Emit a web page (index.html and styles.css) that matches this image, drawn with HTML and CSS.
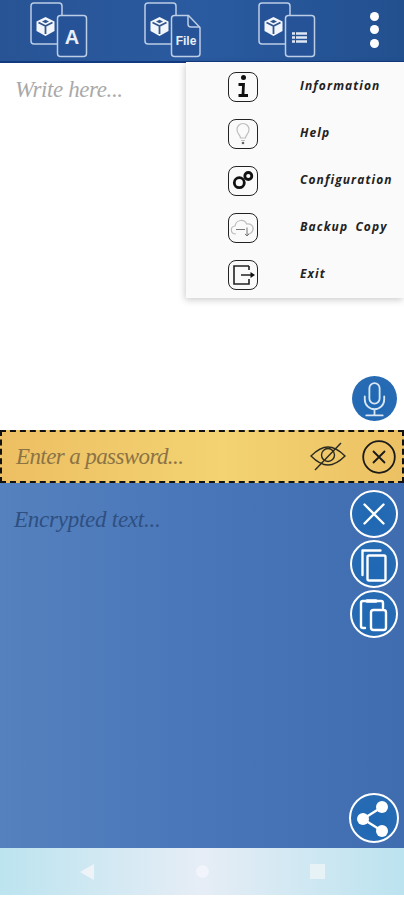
FILE: index.html
```html
<!DOCTYPE html>
<html lang="en">
<head>
<meta charset="utf-8">
<title>Encrypt</title>
<link rel="stylesheet" href="styles.css">
</head>
<body>
<div class="app">
  <svg class="defs" width="0" height="0">
    <defs>
      <g id="stack">
        <path class="card" d="M28 44h-23a3 3 0 0 1-3-3v-35a3 3 0 0 1 3-3h25a3 3 0 0 1 3 3v9"/>
        <path class="cube" d="M7.500 21.500l9-4.500 9 4.500v9.500l-9 5-9-5z"/>
        <path class="cube-line" d="M9.500 22.500l7 3.500 7-3.500M16.500 26v8"/>
        <path class="cube-top" d="M13 21.500l3.500-1.800 3.500 1.800-3.500 1.800z"/>
      </g>
    </defs>
  </svg>

  <header class="topbar">
    <svg class="tab" viewBox="0 0 60 60"><use href="#stack"/><rect class="card" x="28.500" y="15.500" width="29" height="41" rx="3"/><text class="tab-a" x="43" y="44">A</text></svg>
    <svg class="tab" viewBox="0 0 60 60"><use href="#stack"/><path class="card" d="M28.500 18.500a3 3 0 0 1 3-3h14l11.500 12v26a3 3 0 0 1-3 3h-22.500a3 3 0 0 1-3-3z"/><path class="fold" d="M45 16v8a3 3 0 0 0 3 3h9"/><text class="tab-f" x="43" y="45">File</text></svg>
    <svg class="tab" viewBox="0 0 60 60"><use href="#stack"/><rect class="card" x="28.500" y="15.500" width="29" height="41" rx="3"/><path class="lines" d="M35 33.500h3M39 33.500h11M35 37.500h3M39 37.500h11M35 41.500h3M39 41.500h11"/></svg>
    <div class="dots"><span></span><span></span><span></span></div>
  </header>

  <main class="write">
    <p class="placeholder write-text">Write here...</p>
    <button class="round mic" aria-label="Microphone">
      <svg viewBox="0 0 44 44"><rect x="17" y="7" width="10" height="20" rx="5"/><path d="M12.500 20v3a9.500 9.500 0 0 0 19 0v-3M22 33v5M14 38.500h16"/></svg>
    </button>
  </main>

  <nav class="menu">
    <div class="menu-row"><span class="menu-icon"><svg viewBox="0 0 30 30"><circle class="ink" cx="15.500" cy="6.500" r="2.500"/><path class="ink-s" d="M10.500 13.500h5l-.5 10M10.500 24.500h9.500"/></svg></span><span class="menu-label">Information</span></div>
    <div class="menu-row"><span class="menu-icon"><svg viewBox="0 0 30 30"><path class="pale" d="M12.500 20c0-3-3.500-4-3.500-8.500a6 6 0 0 1 12 0c0 4.500-3.500 5.500-3.500 8.500zM13 22.500h4"/><circle class="dim" cx="15" cy="25" r="1.300"/></svg></span><span class="menu-label">Help</span></div>
    <div class="menu-row"><span class="menu-icon"><svg viewBox="0 0 30 30"><circle class="gear" cx="11.300" cy="17.700" r="5"/><circle class="gear" cx="20.300" cy="11" r="3.500"/></svg></span><span class="menu-label">Configuration</span></div>
    <div class="menu-row"><span class="menu-icon"><svg viewBox="0 0 30 30"><path class="pale" d="M8 22c-6 0-6-7.500-1-8 1-6.500 9.500-7.500 11.500-2 5.500-1 8 3.500 6 7-1 2-2.500 3-4.500 3h-1"/><path class="dim-s" d="M8 17.500h9M19 15.500v8.500M17 22l2 2 2-2"/></svg></span><span class="menu-label">Backup Copy</span></div>
    <div class="menu-row"><span class="menu-icon"><svg viewBox="0 0 30 30"><path class="exit" d="M21 7h-15v18h15v-5M21 7v4M13 16h10"/><path class="ink" d="M22.500 13l4.500 3-4.500 3z"/></svg></span><span class="menu-label">Exit</span></div>
  </nav>

  <section class="password">
    <span class="placeholder pass-text">Enter a password...</span>
    <svg class="eye" viewBox="0 0 38 30"><path d="M2 14c6-6 12-9 17-9s11 3 17 9c-6 6-12 9-17 9S8 20 2 14z"/><circle cx="19" cy="13" r="6.500"/><path d="M32 1L6 28"/></svg>
    <svg class="clear" viewBox="0 0 34 34"><circle cx="17" cy="17" r="15.800"/><path d="M11 11l12 12M23 11L11 23"/></svg>
  </section>

  <section class="cipher">
    <p class="placeholder cipher-text">Encrypted text...</p>
    <div class="actions">
      <button class="round ring" aria-label="Clear"><svg viewBox="0 0 44 44"><path d="M12.500 12.500l19 19M31.500 12.500l-19 19"/></svg></button>
      <button class="round ring" aria-label="Copy"><svg viewBox="0 0 44 44"><path d="M10.500 33V8.500h18"/><rect x="15.500" y="13.500" width="18" height="25" rx="1.500"/></svg></button>
      <button class="round ring" aria-label="Paste"><svg viewBox="0 0 44 44"><path d="M13 36h-2a2 2 0 0 1-2-2V11a2 2 0 0 1 2-2h18a2 2 0 0 1 2 2v5"/><path class="clip" d="M15 9h9"/><rect x="19" y="18" width="15" height="20" rx="2.500"/></svg></button>
      <button class="round ring share" aria-label="Share"><svg viewBox="0 0 46 46"><path d="M31 12L12 24l19 12"/><circle class="solid" cx="31" cy="12" r="6"/><circle class="solid" cx="12" cy="24" r="6"/><circle class="solid" cx="31" cy="36" r="6"/></svg></button>
    </div>
  </section>

  <footer class="navbar">
    <svg class="nav-back" viewBox="0 0 14 16"><path d="M14 0v16L0 8z"/></svg>
    <span class="nav-home"></span>
    <span class="nav-recent"></span>
  </footer>
  <div class="strip"></div>
</div>
</body>
</html>
```
FILE: styles.css
```css
* { box-sizing: border-box; }
html, body { margin: 0; padding: 0; background: #fff; }
.app { position: relative; width: 404px; height: 900px; display: flex; flex-direction: column; overflow: hidden; }
.defs { position: absolute; }

.topbar { height: 63px; flex: none; display: flex; align-items: flex-start; padding-left: 29px; background: linear-gradient(90deg, #285495, #2a5aa0 50%, #22508f); border-bottom: 2px solid #123a80; position: relative; }
.tab { width: 60px; height: 60px; margin-right: 54px; flex: none; }
.card { fill: #265397; stroke: #bccde6; stroke-width: 1.500; }
.fold { fill: none; stroke: #bccde6; stroke-width: 1.500; }
.cube { fill: #f2f5f9; stroke: none; }
.cube-line { fill: none; stroke: #30558f; stroke-width: 1.800; }
.cube-top { fill: #30558f; }
.tab-a { font: 700 20px "Liberation Sans", sans-serif; fill: #e8eef7; text-anchor: middle; }
.tab-f { font: 700 12px "Liberation Sans", sans-serif; fill: #e8eef7; text-anchor: middle; }
.lines { fill: none; stroke: #dfe7f3; stroke-width: 2.500; }
.dots { display: flex; flex-direction: column; gap: 4.500px; margin: 11.500px 0 0 -1px; }
.dots span { width: 9px; height: 9px; border-radius: 50%; background: #fff; }

.placeholder { margin: 0; font-family: "Liberation Serif", serif; font-style: italic; font-size: 23px; }

.write { height: 367px; flex: none; display: flex; justify-content: space-between; padding: 12px 7px 9px 15px; background: #fff; }
.write-text { line-height: 30px; letter-spacing: -.4px; color: #a9a9a9; }
.round { width: 46px; height: 46px; padding: 0; border: 0; border-radius: 50%; background: radial-gradient(circle at 50% 60%, #1f68b4, #2a6cb3); flex: none; }
.round svg { display: block; width: 100%; height: 100%; fill: none; stroke: #fff; stroke-width: 2.400; stroke-linecap: round; stroke-linejoin: round; }
.mic { align-self: flex-end; width: 45px; height: 45px; }
.mic svg { stroke: #d9e6f3; stroke-width: 1.800; }

.menu { position: absolute; top: 62px; left: 186px; width: 218px; height: 236px; padding: 1px 0 0 42px; background: #fafafa; box-shadow: -1px 2px 7px rgba(0,0,0,.2); display: flex; flex-direction: column; }
.menu-row { height: 47px; flex: none; display: flex; align-items: center; }
.menu-icon { width: 30px; height: 30px; flex: none; border: 1.500px solid #222; border-radius: 8px; margin-right: 42px; }
.menu-icon svg { display: block; width: 30px; height: 30px; margin: -1.500px; }
.menu-label { font: italic 700 12px "Open Sans", sans-serif; letter-spacing: 1.100px; word-spacing: 3px; color: #222; margin-top: -3px; }
.ink { fill: #111; stroke: none; }
.ink-s { fill: none; stroke: #111; stroke-width: 2.800; }
.pale { fill: none; stroke: #bdbdbd; stroke-width: 1.200; }
.dim { fill: #666; }
.dim-s { fill: none; stroke: #777; stroke-width: 1; }
.gear { fill: none; stroke: #111; stroke-width: 2.800; }
.exit { fill: none; stroke: #222; stroke-width: 1.600; }

.password { height: 53px; flex: none; display: flex; align-items: center; padding: 0 6px 0 14px; border: 2px dashed #111; background: linear-gradient(90deg, #edbf62, #f3d372 55%, #ecc163); }
.pass-text { letter-spacing: -.6px; color: #8b7346; flex: 1; }
.eye { width: 38px; height: 30px; margin-right: 15px; fill: none; stroke: #2b2b22; stroke-width: 1.400; }
.clear { width: 34px; height: 34px; fill: none; stroke: #1a1a1a; stroke-width: 1.800; }

.cipher { height: 365px; flex: none; display: flex; justify-content: space-between; padding: 7px 6px 5px 14px; background: linear-gradient(90deg, #5581be, #4a77b9 45%, #3f6db0); }
.cipher-text { line-height: 60px; height: 60px; letter-spacing: -.25px; color: #2e4f80; }
.actions { display: flex; flex-direction: column; gap: 2px; align-items: center; width: 48px; }
.ring { width: 48px; height: 48px; border: 2px solid #fff; }
.clip { stroke-width: 3.500; }
.solid { fill: #fff; stroke: none; }
.share { margin: auto -1px 0; width: 50px; height: 50px; }

.navbar { height: 47px; flex: none; display: flex; align-items: center; padding: 0 0 0 80px; background: linear-gradient(90deg, #bce4ef, #e6edf6 50%, #bbe3ef); }
.nav-back { width: 14px; height: 16px; fill: #eef3f8; margin-right: 102px; }
.nav-home { width: 13px; height: 13px; border-radius: 50%; background: #f1f4fa; margin-right: 101px; }
.nav-recent { width: 15px; height: 15px; background: #e6f2f6; }
.strip { flex: 1; background: #fff; }
```
